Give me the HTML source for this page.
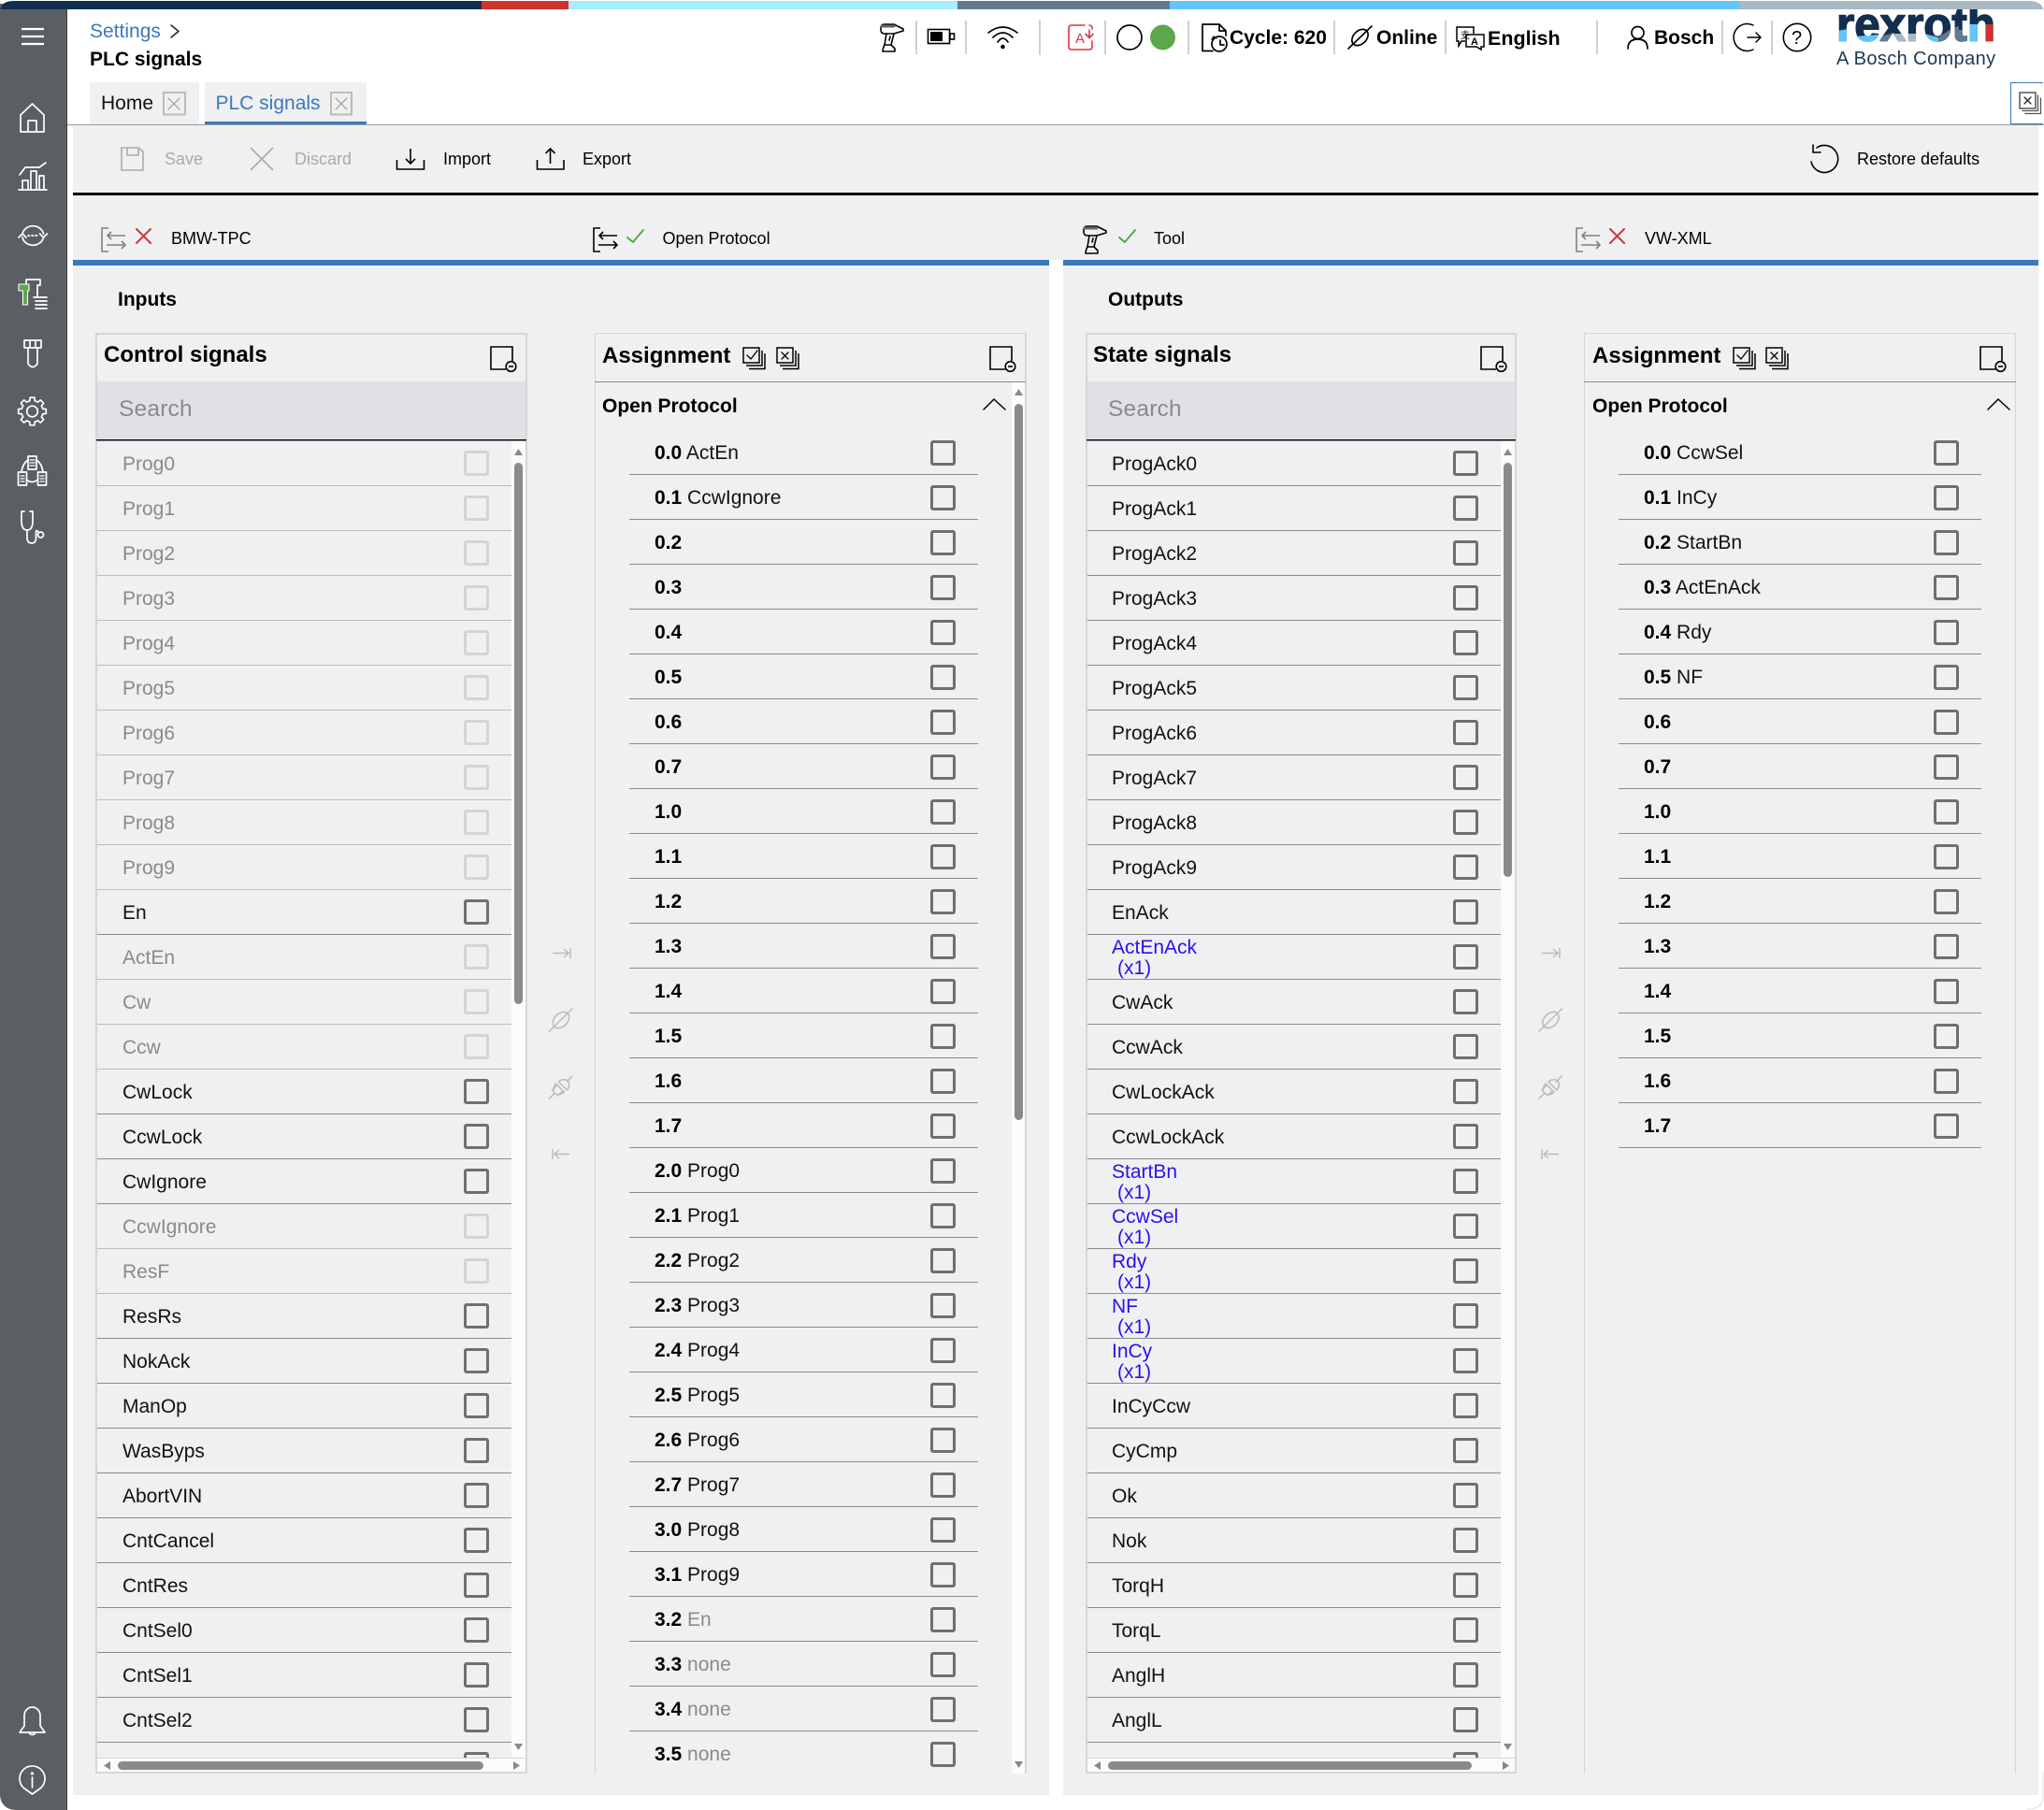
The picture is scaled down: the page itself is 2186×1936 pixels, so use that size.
<!DOCTYPE html>
<html><head><meta charset="utf-8"><title>PLC signals</title>
<style>
html,body{margin:0;padding:0;background:#fff}
body{position:relative;width:2186px;height:1936px;overflow:hidden;font-family:"Liberation Sans","Noto Sans CJK SC",sans-serif;color:#111}
.a{position:absolute}
.t{position:absolute;white-space:nowrap;line-height:30px;height:30px;font-size:21px}
.b{font-weight:bold;color:#000}
.s{font-size:18px;color:#000}
.dis{color:#aaa}
.blue{color:#3b78bd}
.list{position:absolute;overflow:hidden}
.r{position:relative;height:47px;border-bottom:1px solid #8b8b8b;font-size:21px;line-height:49px;padding-left:27px;box-sizing:content-box;white-space:nowrap}
.d{color:#8a8a8a;border-bottom-color:#bcbcbc}
.c{position:absolute;left:392px;top:10px;width:27px;height:27px;box-sizing:border-box;border:3px solid #6f6f6f;border-radius:3px}
.d .c{border-color:#d3d4d6}
.st .r{padding-left:26px}
.st .c{left:391px}
.as .c{left:322px;top:11px}
.asr .c{left:337px;top:11px}
.r b{color:#000}
.r i{font-style:normal;color:#8a8a8a}
.x{color:#2a10ee;line-height:22px;padding-top:3px;height:44px}
.x span{display:block;margin-left:6px}
</style></head><body>

<!-- sidebar -->
<div class="a" style="left:0;top:4px;width:71px;height:1932px;background:#5a5f64;border-right:1px solid #3f4347;border-bottom-left-radius:16px"></div>

<!-- main grey -->
<div class="a" style="left:72px;top:133px;width:2114px;height:1px;background:#9a9a9a;z-index:2"></div>
<div class="a" style="left:78px;top:134px;width:2102px;height:144px;background:#eff0f2"></div>
<div class="a" style="left:78px;top:284px;width:1044px;height:1636px;background:#eff0f2"></div>
<div class="a" style="left:1137px;top:284px;width:1043px;height:1636px;background:#eff0f2"></div>
<div class="a" style="left:78px;top:206px;width:2102px;height:3px;background:#000"></div>
<div class="a" style="left:78px;top:278px;width:1044px;height:6px;background:#3b78bd"></div>
<div class="a" style="left:1137px;top:278px;width:1043px;height:6px;background:#3b78bd"></div>

<!-- header text -->
<div class="t blue" style="left:96px;top:19px">Settings</div>
<div class="t b" style="left:96px;top:49px">PLC signals</div>

<!-- tabs -->
<div class="a" style="left:96px;top:88px;width:117px;height:45px;background:#eff0f2"></div>
<div class="a" style="left:219px;top:88px;width:173px;height:45px;background:#eff0f2"></div>
<div class="a" style="left:219px;top:130px;width:173px;height:3px;background:#3b78bd"></div>
<div class="t" style="left:108px;top:96px;color:#111">Home</div>
<div class="t blue" style="left:230.500px;top:96px">PLC signals</div>
<div class="a" style="left:2150px;top:88px;width:35px;height:45px;border:1px solid #3b78bd;border-right:none;box-sizing:border-box;background:#fff;z-index:3"></div>

<!-- header status text -->
<div class="t b" style="left:1315px;top:26px">Cycle: 620</div>
<div class="t b" style="left:1472px;top:26px">Online</div>
<div class="t b" style="left:1591px;top:26px;font-size:21.5px">English</div>
<div class="t b" style="left:1769px;top:26px">Bosch</div>
<div class="t" style="left:1964px;top:48px;font-size:20px;letter-spacing:.4px;color:#1c3854">A Bosch Company</div>

<!-- separators -->
<div class="a" style="left:979px;top:22px;width:2px;height:36px;background:#cfcfcf"></div>
<div class="a" style="left:1032px;top:22px;width:2px;height:36px;background:#cfcfcf"></div>
<div class="a" style="left:1111px;top:21px;width:2px;height:38px;background:#cfcfcf"></div>
<div class="a" style="left:1181px;top:22px;width:2px;height:36px;background:#cfcfcf"></div>
<div class="a" style="left:1270px;top:22px;width:2px;height:36px;background:#cfcfcf"></div>
<div class="a" style="left:1426px;top:22px;width:2px;height:36px;background:#cfcfcf"></div>
<div class="a" style="left:1545px;top:22px;width:2px;height:36px;background:#cfcfcf"></div>
<div class="a" style="left:1707px;top:22px;width:2px;height:36px;background:#cfcfcf"></div>
<div class="a" style="left:1841px;top:22px;width:2px;height:36px;background:#cfcfcf"></div>
<div class="a" style="left:1894px;top:22px;width:2px;height:36px;background:#cfcfcf"></div>

<!-- toolbar text -->
<div class="t s dis" style="left:176px;top:155px">Save</div>
<div class="t s dis" style="left:315px;top:155px">Discard</div>
<div class="t s" style="left:474px;top:155px">Import</div>
<div class="t s" style="left:623px;top:155px">Export</div>
<div class="t s" style="left:1986px;top:155px">Restore defaults</div>

<div class="t s" style="left:183px;top:240px">BMW-TPC</div>
<div class="t s" style="left:708.500px;top:240px">Open Protocol</div>
<div class="t s" style="left:1234px;top:240px">Tool</div>
<div class="t s" style="left:1759px;top:240px">VW-XML</div>

<div class="t b" style="left:126px;top:306px">Inputs</div>
<div class="t b" style="left:1185px;top:306px">Outputs</div>

<!-- panels -->
<div class="a" style="left:102px;top:356px;width:462px;height:1541px;border:2px solid #d5d6d8;box-sizing:border-box"></div>
<div class="a" style="left:1161px;top:356px;width:461px;height:1541px;border:2px solid #d5d6d8;box-sizing:border-box"></div>
<div class="a" style="left:636px;top:356px;width:462px;height:1541px;border:1px solid #d5d6d8;border-right-width:2px;border-bottom:none;box-sizing:border-box"></div>
<div class="a" style="left:1694px;top:356px;width:462px;height:1541px;border:1px solid #d5d6d8;border-bottom:none;box-sizing:border-box"></div>
<div class="a" style="left:636px;top:408px;width:461px;height:1px;background:#8b8b8b"></div>
<div class="a" style="left:1694px;top:408px;width:462px;height:1px;background:#8b8b8b"></div>

<div class="a" style="left:104px;top:408px;width:458px;height:62px;background:#e0e1e5"></div>
<div class="a" style="left:1163px;top:408px;width:457px;height:62px;background:#e0e1e5"></div>
<div class="a" style="left:103px;top:470px;width:460px;height:1px;background:#000"></div>
<div class="a" style="left:103px;top:471px;width:460px;height:1px;background:#888"></div>
<div class="a" style="left:1162px;top:470px;width:459px;height:1px;background:#000"></div>
<div class="a" style="left:1162px;top:471px;width:459px;height:1px;background:#888"></div>

<div class="t b" style="left:111px;top:365px;font-size:24px">Control signals</div>
<div class="t b" style="left:1169px;top:365px;font-size:24px">State signals</div>
<div class="t b" style="left:644px;top:366px;font-size:24px">Assignment</div>
<div class="t b" style="left:1703px;top:366px;font-size:24px">Assignment</div>
<div class="t b" style="left:644px;top:420px">Open Protocol</div>
<div class="t b" style="left:1703px;top:420px">Open Protocol</div>
<div class="t" style="left:127px;top:423px;font-size:24.5px;letter-spacing:.2px;color:#8a8a8a">Search</div>
<div class="t" style="left:1185px;top:423px;font-size:24.5px;letter-spacing:.2px;color:#8a8a8a">Search</div>

<!-- control signals -->
<div class="list" style="left:104px;top:472px;width:443px;height:1408px">
<div class="r d">Prog0<span class="c"></span></div>
<div class="r d">Prog1<span class="c"></span></div>
<div class="r d">Prog2<span class="c"></span></div>
<div class="r d">Prog3<span class="c"></span></div>
<div class="r d">Prog4<span class="c"></span></div>
<div class="r d">Prog5<span class="c"></span></div>
<div class="r d">Prog6<span class="c"></span></div>
<div class="r d">Prog7<span class="c"></span></div>
<div class="r d">Prog8<span class="c"></span></div>
<div class="r d">Prog9<span class="c"></span></div>
<div class="r">En<span class="c"></span></div>
<div class="r d">ActEn<span class="c"></span></div>
<div class="r d">Cw<span class="c"></span></div>
<div class="r d">Ccw<span class="c"></span></div>
<div class="r">CwLock<span class="c"></span></div>
<div class="r">CcwLock<span class="c"></span></div>
<div class="r">CwIgnore<span class="c"></span></div>
<div class="r d">CcwIgnore<span class="c"></span></div>
<div class="r d">ResF<span class="c"></span></div>
<div class="r">ResRs<span class="c"></span></div>
<div class="r">NokAck<span class="c"></span></div>
<div class="r">ManOp<span class="c"></span></div>
<div class="r">WasByps<span class="c"></span></div>
<div class="r">AbortVIN<span class="c"></span></div>
<div class="r">CntCancel<span class="c"></span></div>
<div class="r">CntRes<span class="c"></span></div>
<div class="r">CntSel0<span class="c"></span></div>
<div class="r">CntSel1<span class="c"></span></div>
<div class="r">CntSel2<span class="c"></span></div>
<div class="r"><span class="c"></span></div>
</div>

<!-- state signals -->
<div class="list st" style="left:1163px;top:472px;width:442px;height:1408px">
<div class="r">ProgAck0<span class="c"></span></div>
<div class="r">ProgAck1<span class="c"></span></div>
<div class="r">ProgAck2<span class="c"></span></div>
<div class="r">ProgAck3<span class="c"></span></div>
<div class="r">ProgAck4<span class="c"></span></div>
<div class="r">ProgAck5<span class="c"></span></div>
<div class="r">ProgAck6<span class="c"></span></div>
<div class="r">ProgAck7<span class="c"></span></div>
<div class="r">ProgAck8<span class="c"></span></div>
<div class="r">ProgAck9<span class="c"></span></div>
<div class="r">EnAck<span class="c"></span></div>
<div class="r x">ActEnAck<span>(x1)</span><span class="c" style="margin:0"></span></div>
<div class="r">CwAck<span class="c"></span></div>
<div class="r">CcwAck<span class="c"></span></div>
<div class="r">CwLockAck<span class="c"></span></div>
<div class="r">CcwLockAck<span class="c"></span></div>
<div class="r x">StartBn<span>(x1)</span><span class="c" style="margin:0"></span></div>
<div class="r x">CcwSel<span>(x1)</span><span class="c" style="margin:0"></span></div>
<div class="r x">Rdy<span>(x1)</span><span class="c" style="margin:0"></span></div>
<div class="r x">NF<span>(x1)</span><span class="c" style="margin:0"></span></div>
<div class="r x">InCy<span>(x1)</span><span class="c" style="margin:0"></span></div>
<div class="r">InCyCcw<span class="c"></span></div>
<div class="r">CyCmp<span class="c"></span></div>
<div class="r">Ok<span class="c"></span></div>
<div class="r">Nok<span class="c"></span></div>
<div class="r">TorqH<span class="c"></span></div>
<div class="r">TorqL<span class="c"></span></div>
<div class="r">AnglH<span class="c"></span></div>
<div class="r">AnglL<span class="c"></span></div>
<div class="r"><span class="c"></span></div>
</div>

<!-- assignment left -->
<div class="list as" style="left:673px;top:460px;width:373px;height:1437px">
<div class="r"><b>0.0</b> ActEn<span class="c"></span></div>
<div class="r"><b>0.1</b> CcwIgnore<span class="c"></span></div>
<div class="r"><b>0.2</b><span class="c"></span></div>
<div class="r"><b>0.3</b><span class="c"></span></div>
<div class="r"><b>0.4</b><span class="c"></span></div>
<div class="r"><b>0.5</b><span class="c"></span></div>
<div class="r"><b>0.6</b><span class="c"></span></div>
<div class="r"><b>0.7</b><span class="c"></span></div>
<div class="r"><b>1.0</b><span class="c"></span></div>
<div class="r"><b>1.1</b><span class="c"></span></div>
<div class="r"><b>1.2</b><span class="c"></span></div>
<div class="r"><b>1.3</b><span class="c"></span></div>
<div class="r"><b>1.4</b><span class="c"></span></div>
<div class="r"><b>1.5</b><span class="c"></span></div>
<div class="r"><b>1.6</b><span class="c"></span></div>
<div class="r"><b>1.7</b><span class="c"></span></div>
<div class="r"><b>2.0</b> Prog0<span class="c"></span></div>
<div class="r"><b>2.1</b> Prog1<span class="c"></span></div>
<div class="r"><b>2.2</b> Prog2<span class="c"></span></div>
<div class="r"><b>2.3</b> Prog3<span class="c"></span></div>
<div class="r"><b>2.4</b> Prog4<span class="c"></span></div>
<div class="r"><b>2.5</b> Prog5<span class="c"></span></div>
<div class="r"><b>2.6</b> Prog6<span class="c"></span></div>
<div class="r"><b>2.7</b> Prog7<span class="c"></span></div>
<div class="r"><b>3.0</b> Prog8<span class="c"></span></div>
<div class="r"><b>3.1</b> Prog9<span class="c"></span></div>
<div class="r"><b>3.2</b> <i>En</i><span class="c"></span></div>
<div class="r"><b>3.3</b> <i>none</i><span class="c"></span></div>
<div class="r"><b>3.4</b> <i>none</i><span class="c"></span></div>
<div class="r"><b>3.5</b> <i>none</i><span class="c"></span></div>
</div>

<!-- assignment right -->
<div class="list asr" style="left:1731px;top:460px;width:388px;height:768px">
<div class="r"><b>0.0</b> CcwSel<span class="c"></span></div>
<div class="r"><b>0.1</b> InCy<span class="c"></span></div>
<div class="r"><b>0.2</b> StartBn<span class="c"></span></div>
<div class="r"><b>0.3</b> ActEnAck<span class="c"></span></div>
<div class="r"><b>0.4</b> Rdy<span class="c"></span></div>
<div class="r"><b>0.5</b> NF<span class="c"></span></div>
<div class="r"><b>0.6</b><span class="c"></span></div>
<div class="r"><b>0.7</b><span class="c"></span></div>
<div class="r"><b>1.0</b><span class="c"></span></div>
<div class="r"><b>1.1</b><span class="c"></span></div>
<div class="r"><b>1.2</b><span class="c"></span></div>
<div class="r"><b>1.3</b><span class="c"></span></div>
<div class="r"><b>1.4</b><span class="c"></span></div>
<div class="r"><b>1.5</b><span class="c"></span></div>
<div class="r"><b>1.6</b><span class="c"></span></div>
<div class="r"><b>1.7</b><span class="c"></span></div>
</div>

<!-- scrollbars -->
<div class="a" style="left:547px;top:472px;width:15px;height:1408px;background:#fbfbfb"></div>
<div class="a" style="left:550px;top:495px;width:9px;height:579px;background:#8a8a8a;border-radius:5px"></div>
<div class="a" style="left:104px;top:1880px;width:458px;height:15px;background:#fbfbfb;border-top:1px solid #d5d6d8;box-sizing:border-box"></div>
<div class="a" style="left:126px;top:1884px;width:391px;height:9px;background:#8a8a8a;border-radius:5px"></div>

<div class="a" style="left:1605px;top:472px;width:15px;height:1408px;background:#fbfbfb"></div>
<div class="a" style="left:1608px;top:495px;width:9px;height:443px;background:#8a8a8a;border-radius:5px"></div>
<div class="a" style="left:1163px;top:1880px;width:457px;height:15px;background:#fbfbfb;border-top:1px solid #d5d6d8;box-sizing:border-box"></div>
<div class="a" style="left:1185px;top:1884px;width:389px;height:9px;background:#8a8a8a;border-radius:5px"></div>

<div class="a" style="left:1082px;top:409px;width:14px;height:1488px;background:#fbfbfb"></div>
<div class="a" style="left:1085px;top:432px;width:9px;height:766px;background:#8a8a8a;border-radius:5px"></div>

<!-- icons overlay -->
<svg class="a" style="left:0;top:0;z-index:5" width="2186" height="1936" viewBox="0 0 2186 1936" fill="none" stroke-linecap="round" stroke-linejoin="round">
<defs>
<clipPath id="lbc"><polygon points="1960,34 1976,31 1976,46 1960,46"/><polygon points="1984,39 2010,37 2010,46 1984,46"/><polygon points="2058,36 2073,40 2073,46 2058,46"/><polygon points="2106,26 2119,26 2119,46 2106,46"/></clipPath>
<clipPath id="slc"><polygon points="2008,46 2008,40 2026,35 2026,46"/><polygon points="2073,40 2088,30 2095,28 2095,46 2073,46"/><polygon points="2095,32 2106,32 2106,46 2095,46"/></clipPath>
<clipPath id="ltc"><polygon points="2026,36 2058,36 2058,46 2026,46"/></clipPath>
<clipPath id="rdc"><polygon points="2119,26 2136,26 2136,46 2119,46"/></clipPath>
<g id="conn" stroke-width="1.600" stroke-linecap="butt" stroke-linejoin="miter"><path d="M8 1H1V26H8"/><path d="M26 9H7M11 5L7 9L11 13"/><path d="M6 19H26M22 15L26 19L22 23"/></g>
<g id="tool" stroke="#000" stroke-width="1.600"><path d="M1 5Q1 1 5 1H15L25 6V8L15 11H5Q1 11 1 7Z"/><path d="M2 3H15" stroke-width="3" stroke="#666"/><path d="M7 11L5 23H12L15 11"/><path d="M5 23Q3 27 3 30H16V27L12 23"/><path d="M11 14L10 18"/></g>
<g id="coll" stroke="#000" stroke-width="1.600" stroke-linecap="butt" stroke-linejoin="miter"><path d="M23 15V0H0V24H16"/><circle cx="21.500" cy="21" r="5.300"/><path d="M19 21H24"/></g>
<g id="stack" stroke="#000" stroke-width="1.500" stroke-linecap="butt" stroke-linejoin="miter"><rect x="0" y="0" width="17" height="16"/><path d="M20 3V19H3M23 6V22.500H6"/></g>
<g id="plug" stroke="#bbb" stroke-width="1.500"><path d="M0 24L24.500 0"/><ellipse cx="12.500" cy="12" rx="10" ry="7" transform="rotate(-45 12.500 12)"/></g>
<g id="unplug" stroke="#bbb" stroke-width="1.500"><path d="M0 24L6 18M18.500 6L24.500 0"/><path d="M7 8L16 17Q10 22 5 18Q3 13 7 8Z"/><path d="M10 6L19 15Q23 10 20 5Q15 2 10 6Z"/><path d="M3 15L8 10M9 21L14 16"/></g>
<path id="gt" d="M11.160 -2.780L14.820 -2.350V2.350L11.160 2.780A11.500 11.500 0 0 1 9.860 5.920"/>
</defs>

<!-- logo -->
<text x="1964" y="43.500" font-family="Liberation Sans" font-weight="bold" font-size="51" textLength="170" lengthAdjust="spacingAndGlyphs" fill="#122f4d" stroke="#122f4d" stroke-width="1.500" stroke-linecap="butt">rexroth</text>
<text x="1964" y="43.500" font-family="Liberation Sans" font-weight="bold" font-size="51" textLength="170" lengthAdjust="spacingAndGlyphs" fill="#60c6fa" stroke="#60c6fa" stroke-width="1.500" clip-path="url(#lbc)">rexroth</text>
<text x="1964" y="43.500" font-family="Liberation Sans" font-weight="bold" font-size="51" textLength="170" lengthAdjust="spacingAndGlyphs" fill="#627a8f" stroke="#627a8f" stroke-width="1.500" clip-path="url(#slc)">rexroth</text>
<text x="1964" y="43.500" font-family="Liberation Sans" font-weight="bold" font-size="51" textLength="170" lengthAdjust="spacingAndGlyphs" fill="#a8b9c4" stroke="#a8b9c4" stroke-width="1.500" clip-path="url(#ltc)">rexroth</text>
<text x="1964" y="43.500" font-family="Liberation Sans" font-weight="bold" font-size="51" textLength="170" lengthAdjust="spacingAndGlyphs" fill="#d0322f" stroke="#d0322f" stroke-width="1.500" clip-path="url(#rdc)">rexroth</text>

<!-- top bar -->
<path d="M0 10V14Q0 1 14 1H515V10Z" fill="#122f4d"/>
<rect x="515" y="1" width="93" height="9" fill="#d0322f"/>
<rect x="608" y="1" width="416" height="9" fill="#a5eeff"/>
<rect x="1024" y="1" width="227" height="9" fill="#627a8f"/>
<rect x="1251" y="1" width="610" height="9" fill="#60c6fa"/>
<path d="M1861 1H2170Q2184 1 2186 12V10H1861Z" fill="#a8b9c4"/>
<rect x="0" y="10" width="71" height="6" fill="#5a5f64"/>

<!-- outer corner -->
<path d="M2185 1895V1922Q2185 1935 2168 1935" stroke="#e2e4e6" stroke-width="1.200"/>

<!-- sidebar icons -->
<g stroke="#fff" stroke-width="1.700">
<path d="M23 31H47M23 39H47M23 47H47" stroke-width="2.200" stroke-linecap="butt"/>
<path d="M22 141V123L34.500 111L47 123V141Z"/><path d="M30 141V129H39V141"/>
<path d="M20 203H50M24 203V193H30V203M33 203V183H39V203M42 203V188H47V203"/><path d="M21 187L27 179H42L49 174"/>
<path d="M24 250A11.500 10.500 0 0 1 46.500 250M24 254A11.500 10.500 0 0 0 46.500 254"/><path d="M20 254L24 250L28 254M42.500 250L46.500 254L50.500 250"/><path d="M30 252H40" stroke-dasharray="1.500 2.500"/>
<path d="M28 304V299H43V305H40V318H36"/>
<path d="M20 304H31V311H29.500V326H24.500V311H20Z" fill="#5aa84a" stroke-width="1.100"/>
<path d="M38 318H50M38 322H50M38 326H50M38 330H50"/>
<path d="M26 364H44V372H26ZM32 364V372M38 364V372M30 372V389Q35 396 40 389V372"/>
<g transform="translate(34.500 440)"><circle r="5.800"/><use href="#gt"/><use href="#gt" transform="rotate(45)"/><use href="#gt" transform="rotate(90)"/><use href="#gt" transform="rotate(135)"/><use href="#gt" transform="rotate(180)"/><use href="#gt" transform="rotate(225)"/><use href="#gt" transform="rotate(270)"/><use href="#gt" transform="rotate(315)"/></g>
<rect x="30" y="488" width="9" height="14"/><rect x="19.500" y="505" width="9" height="14"/><rect x="40.500" y="505" width="9" height="14"/>
<path d="M32 492H37M32 495H37M32 498H37M22 509H26M22 512H26M22 515H26M43 509H47M43 512H47M43 515H47" stroke-width="1.300"/>
<path d="M23 505Q24 496 30 492M46 505Q45 496 39 492M28.500 513Q34 518 40.500 513"/>
<path d="M26 547H23V557Q23 567 29 567Q35 567 35 557V547H32"/><path d="M29 567V575Q29 581 34 581Q38.500 581 38.500 575V569Q38.500 566 41 569"/><circle cx="43.500" cy="572" r="3"/>
<path d="M21 1853L26 1846V1835A8.500 9 0 0 1 43 1835V1846L48 1853Z"/><path d="M31 1853A3.700 3.700 0 0 0 38 1853"/>
<path d="M27.500 1914A13.500 13.500 0 1 1 41.500 1914L34.500 1919Z"/><path d="M34.500 1901V1912"/><circle cx="34.500" cy="1897" r=".8"/>
</g>

<!-- breadcrumb chevron -->
<path d="M183 27L191 33.500L183 40" stroke="#222" stroke-width="1.500"/>

<!-- tab close -->
<rect x="175" y="99" width="23" height="23.500" stroke="#bbb" stroke-width="2" stroke-linejoin="miter"/>
<path d="M180 105L192 117M192 105L180 117" stroke="#999" stroke-width="1.200"/>
<rect x="354" y="99" width="22" height="23.500" stroke="#bbb" stroke-width="2" stroke-linejoin="miter"/>
<path d="M359 105L371 117M371 105L359 117" stroke="#999" stroke-width="1.200"/>

<!-- stack tab icon -->
<g stroke="#555" transform="translate(2160 99)"><rect x="0" y="0" width="17" height="17" stroke-width="1.500"/><path d="M19.500 3V19.500H3M22.500 6V22.500H6" stroke-width="1.300"/><path d="M5 5L12 12M12 5L5 12" stroke="#222" stroke-width="1.300"/></g>

<!-- header status icons -->
<use href="#tool" transform="translate(941 25)"/>
<g stroke="#000" stroke-width="1.600" stroke-linecap="butt" stroke-linejoin="miter"><rect x="992.500" y="31.500" width="23" height="15"/><rect x="995" y="34" width="13" height="10" fill="#000" stroke="none"/><rect x="1016" y="36" width="4.500" height="6"/></g>
<g stroke="#000" stroke-width="1.700"><path d="M1057 35Q1072.500 23 1088 35M1062 40Q1072.500 30 1083 40M1067 45Q1072.500 37 1078 45"/><circle cx="1072.500" cy="50" r="2.300" fill="#000" stroke="none"/></g>
<g stroke="#d9363a" stroke-width="1.600"><path d="M1160 27H1146Q1143 27 1143 30V50Q1143 53 1146 53H1165Q1168 53 1168 50V44M1165 27Q1168 27 1168 30V31"/><path d="M1165 32V40M1161 36.500L1165 40.500L1169 36.500"/></g>
<text x="1150" y="46" font-family="Liberation Sans" font-size="15" fill="#d9363a">A</text>
<circle cx="1208" cy="40" r="13" stroke="#000" stroke-width="1.700"/>
<circle cx="1243.500" cy="40" r="13.500" fill="#5aa84a"/>
<g stroke="#000" stroke-width="1.700"><path d="M1297 54.500H1286V26H1304L1311 33V38M1304 26V33H1311"/><circle cx="1304" cy="47" r="8"/><path d="M1305 43V48H1309"/><path d="M1296 42L1298 39L1301 41" stroke-width="1.300"/></g>
<g stroke="#000" stroke-width="1.700"><path d="M1442 52L1467 28"/><ellipse cx="1454.500" cy="40" rx="10" ry="7" transform="rotate(-45 1454.500 40)"/></g>
<g stroke="#000" stroke-width="1.500" stroke-linecap="butt" stroke-linejoin="miter"><path d="M1567 44H1563L1560 49V44H1558V29H1576V36"/><path d="M1568 37H1587V50H1584V53L1579 50H1568Z"/></g>
<text x="1562" y="41" font-family="Noto Sans CJK SC" font-size="10" fill="#000">支</text>
<text x="1573" y="48" font-family="Liberation Sans" font-weight="bold" font-size="11" fill="#000">A</text>
<g stroke="#000" stroke-width="1.700"><circle cx="1751.500" cy="35" r="6.500"/><path d="M1741 52Q1741 42 1751.500 42Q1762 42 1762 52"/></g>
<g stroke="#000" stroke-width="1.500"><path d="M1875 27A14.500 14.500 0 1 0 1875 53"/><path d="M1869 40H1883M1878 35L1883 40L1878 45"/></g>
<circle cx="1922" cy="40" r="14.700" stroke="#000" stroke-width="1.600"/>
<text x="1916" y="47" font-family="Liberation Sans" font-size="20" fill="#000">?</text>

<!-- toolbar icons -->
<g stroke="#aaa" stroke-width="1.600" stroke-linecap="butt" stroke-linejoin="miter"><path d="M130 158H148L153 162V182H130Z"/><path d="M136 158V166H148V158"/><path d="M268 158L292 182M292 158L268 182"/></g>
<g stroke="#000" stroke-width="1.600" stroke-linecap="butt" stroke-linejoin="miter"><path d="M424.500 171V181H453.500V171"/><path d="M439 159V175M434 170L439 175L444 170"/><path d="M574.500 171V181H603V171"/><path d="M588.500 175V159M583.500 164L588.500 159L593.500 164"/></g>
<g stroke="#000" stroke-width="1.600"><path d="M1943 158A14.500 14.500 0 1 1 1937 173"/><path d="M1939 155V163H1947"/></g>

<!-- connection icons -->
<use href="#conn" transform="translate(108 243)" stroke="#808080"/>
<path d="M146 245L161 260M161 245L146 260" stroke="#d0353a" stroke-width="2"/>
<use href="#conn" transform="translate(634 243)" stroke="#000"/>
<path d="M671 254L677 259L688 246" stroke="#4aa63c" stroke-width="1.800"/>
<use href="#tool" transform="translate(1158 241)"/>
<path d="M1197 254L1203 259L1214 246" stroke="#4aa63c" stroke-width="1.800"/>
<use href="#conn" transform="translate(1685 243)" stroke="#808080"/>
<path d="M1722 245L1737 260M1737 245L1722 260" stroke="#d0353a" stroke-width="2"/>

<!-- panel header icons -->
<use href="#coll" transform="translate(525 371)"/>
<use href="#coll" transform="translate(1059 371)"/>
<use href="#coll" transform="translate(1584 371)"/>
<use href="#coll" transform="translate(2118 371)"/>
<use href="#stack" transform="translate(795 372)"/>
<path d="M799 380L803 384L810 375" stroke="#000" stroke-width="1.300"/>
<use href="#stack" transform="translate(831 372)"/>
<path d="M836 377L843 384M843 377L836 384" stroke="#000" stroke-width="1.300"/>
<use href="#stack" transform="translate(1854 372)"/>
<path d="M1858 380L1862 384L1869 375" stroke="#000" stroke-width="1.300"/>
<use href="#stack" transform="translate(1889 372)"/>
<path d="M1894 377L1901 384M1901 377L1894 384" stroke="#000" stroke-width="1.300"/>
<path d="M1052 438L1063 427L1075 438M2126 438L2137 427L2149 438" stroke="#000" stroke-width="1.500"/>

<!-- transfer icons -->
<g stroke="#bbb" stroke-width="1.500" stroke-linecap="butt" stroke-linejoin="miter">
<path d="M591 1019.500H608M603 1015L608 1019.500L603 1024M610 1014V1025"/>
<path d="M591 1229V1240M593 1234.500H609M598 1230L593 1234.500L598 1239"/>
<path d="M1649 1019.500H1666M1661 1015L1666 1019.500L1661 1024M1668 1014V1025"/>
<path d="M1649 1229V1240M1651 1234.500H1667M1656 1230L1651 1234.500L1656 1239"/>
</g>
<use href="#plug" transform="translate(587.500 1079)"/>
<use href="#unplug" transform="translate(587.500 1151)"/>
<use href="#plug" transform="translate(1646 1079)"/>
<use href="#unplug" transform="translate(1646 1151)"/>

<!-- scroll arrows -->
<g fill="#888" stroke="none">
<path d="M550 487L554.500 480L559 487Z"/><path d="M550 1865L554.500 1872L559 1865Z"/>
<path d="M118 1884L111 1888.500L118 1893Z"/><path d="M549 1884L556 1888.500L549 1893Z"/>
<path d="M1608 487L1612.500 480L1617 487Z"/><path d="M1608 1865L1612.500 1872L1617 1865Z"/>
<path d="M1177 1884L1170 1888.500L1177 1893Z"/><path d="M1607 1884L1614 1888.500L1607 1893Z"/>
<path d="M1085 423L1089.500 416L1094 423Z"/><path d="M1085 1884L1089.500 1891L1094 1884Z"/>
</g>
</svg>
</body></html>
